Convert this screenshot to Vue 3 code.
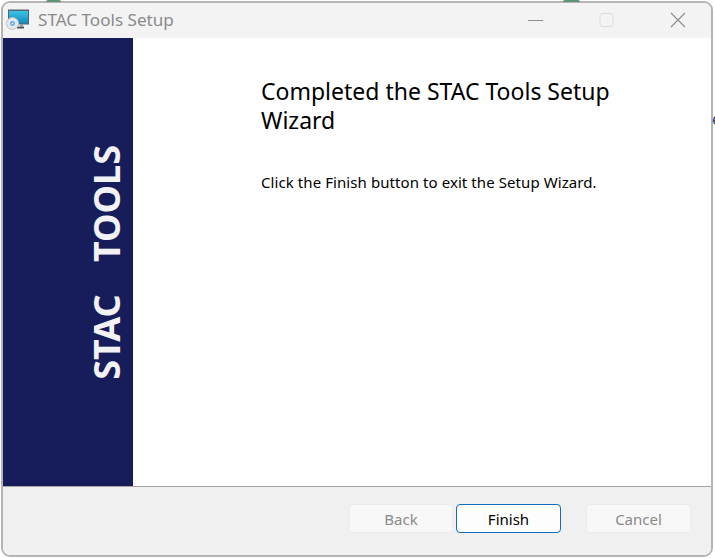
<script setup>
const title = 'STAC Tools Setup'
</script>

<template>
  <div class="desk">
    <div class="window">
      <header class="titlebar">
        <svg class="app-icon" width="24" height="22" viewBox="0 0 24 22">
          <defs>
            <linearGradient id="screen" x1="0" y1="0" x2="0" y2="1">
              <stop offset="0" stop-color="#3cc4e4" />
              <stop offset="1" stop-color="#1388bd" />
            </linearGradient>
          </defs>
          <rect x="3" y="0.5" width="21" height="15" fill="#56646d" />
          <rect x="4" y="2" width="19" height="12.5" fill="url(#screen)" />
          <rect x="12" y="17.5" width="7" height="2" fill="#4a5258" />
          <rect x="15" y="15.5" width="3" height="2" fill="#8b959b" />
          <circle cx="7.5" cy="14.5" r="6" fill="#e6e9eb" stroke="#b9c0c5" stroke-width="1" />
          <circle cx="7.5" cy="14.5" r="2.4" fill="#5aa4e2" />
          <circle cx="7.5" cy="14.5" r="0.9" fill="#f5f7f8" />
        </svg>
        <span class="title">{{ title }}</span>
        <div class="controls">
          <span class="ctl"><svg width="16" height="16" viewBox="0 0 16 16"><path d="M0 8.5h15" stroke="#8f8f8f" fill="none" /></svg></span>
          <span class="ctl"><svg width="16" height="16" viewBox="0 0 16 16"><rect x="1" y="1.5" width="13" height="13" rx="2" fill="none" stroke="#dcdcdc" /></svg></span>
          <span class="ctl"><svg width="16" height="16" viewBox="0 0 16 16"><path d="M1 1l14 14M15 1L1 15" stroke="#8a8a8a" stroke-width="1.1" fill="none" /></svg></span>
        </div>
      </header>
      <main class="body">
        <aside class="banner"><span class="banner-text">STAC TOOLS</span></aside>
        <section class="content">
          <h1 class="heading">Completed the STAC Tools Setup Wizard</h1>
          <p class="message">Click the Finish button to exit the Setup Wizard.</p>
        </section>
      </main>
      <footer class="footer">
        <button class="btn" disabled>Back</button>
        <button class="btn primary">Finish</button>
        <button class="btn cancel" disabled>Cancel</button>
      </footer>
    </div>
    <span class="arc arc-a"></span>
    <span class="arc arc-b"></span>
    <span class="stray">e</span>
  </div>
</template>

<style>
html, body { margin: 0; background: #fff; }
</style>

<style scoped>
.desk {
  position: relative;
  width: 715px;
  height: 558px;
  box-sizing: border-box;
  padding: 1px;
  background: #fff;
  overflow: hidden;
  font-family: "Noto Sans", "Open Sans", sans-serif;
}
.arc {
  position: absolute;
  top: 0;
  height: 2px;
  background: #5f9270;
  border-radius: 8px 8px 0 0;
}
.arc-a { left: 46px; width: 15px; }
.arc-b { left: 563px; width: 17px; }
.stray {
  position: absolute;
  left: 712px;
  top: 108px;
  font-size: 16px;
  color: #2a3a7a;
}
.window {
  position: relative;
  display: flex;
  flex-direction: column;
  box-sizing: border-box;
  width: 712px;
  height: 556px;
  border: 2px solid #b4b4b4;
  border-radius: 9px;
  overflow: hidden;
  background: #f0f0f0;
}
.titlebar {
  display: flex;
  align-items: center;
  flex: 0 0 35px;
  box-sizing: border-box;
  background: #f3f3f3;
  padding: 0 0 2px 2px;
}
.app-icon { margin-right: 9px; }
.title { font-size: 17.1px; color: #8a8a8a; }
.controls {
  margin-left: auto;
  display: flex;
  align-items: center;
  gap: 55px;
  padding-right: 25px;
}
.ctl { display: flex; }
.body { display: flex; flex: 0 0 448px; background: #fff; border-bottom: 1px solid #a4a4a4; }
.banner {
  flex: 0 0 130px;
  display: flex;
  align-items: center;
  justify-content: flex-end;
  background: #161d5a;
}
.banner-text {
  writing-mode: vertical-rl;
  transform: rotate(180deg);
  white-space: nowrap;
  color: #f2f2f5;
  font-size: 36px;
  font-weight: 700;
  line-height: 53px;
  word-spacing: 23px;
  margin-top: 1px;
}
.content { padding: 39px 60px 0 128px; flex: 1; }
.heading {
  margin: 0;
  font-size: 23px;
  line-height: 29px;
  font-weight: 400;
  color: #000;
}
.message {
  margin: 37px 0 0;
  font-size: 15px;
  line-height: 20px;
  letter-spacing: 0.08px;
  color: #000;
}
.footer {
  flex: 1;
  display: flex;
  align-items: flex-start;
  padding: 17px 0 0 346px;
  background: #f0f0f0;
}
.btn {
  box-sizing: border-box;
  width: 104px;
  height: 29px;
  border: 1px solid #ececec;
  border-radius: 4px;
  background: #f8f8f8;
  color: #8a8a8a;
  font-family: inherit;
  font-size: 15px;
  padding: 0;
}
.primary {
  width: 105px;
  margin-left: 3px;
  border-color: #0f6cc0;
  background: #fdfdfd;
  color: #000;
}
.cancel { margin-left: 25px; width: 105px; }
</style>
